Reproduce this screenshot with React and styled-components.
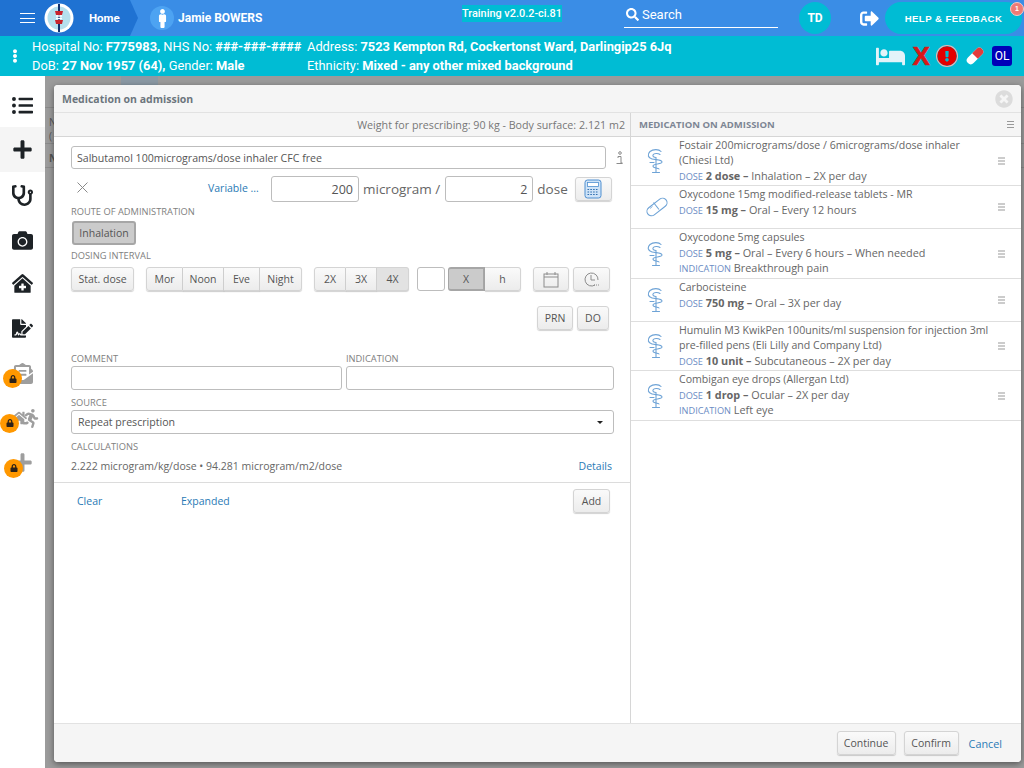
import React from 'react';
import styled, { createGlobalStyle } from 'styled-components';
import {
  FaListUl, FaPlus, FaStethoscope, FaCamera, FaClinicMedical, FaFileSignature,
  FaLock, FaBed, FaExclamationCircle, FaSignOutAlt, FaEnvelopeOpenText,
  FaRunning, FaMale, FaSearch, FaEllipsisV, FaTimesCircle, FaHome,
} from 'react-icons/fa';

const GlobalStyle = createGlobalStyle`
  html, body { margin: 0; padding: 0; height: 100%; overflow: hidden; }
  body { font-family: "Open Sans", "Liberation Sans", sans-serif; color: #555; }
  * { box-sizing: border-box; }
`;

const Page = styled.div`
  width: 1024px;
  height: 768px;
  display: flex;
  flex-direction: column;
  overflow: hidden;
  background: #9b9b9b;
`;

const TopBar = styled.header`
  height: 36px;
  display: flex;
  align-items: center;
  background: #3a8de6;
  color: #fff;
  font-family: Roboto, sans-serif;
  flex: none;
`;

const HomeCrumb = styled.div`
  width: 138px;
  height: 36px;
  display: flex;
  align-items: center;
  flex: none;
  padding-left: 20px;
  background: #1f72d2;
  clip-path: polygon(0 0, 130px 0, 138px 18px, 130px 36px, 0 36px);
`;

const Burger = styled.div`
  width: 15px;
  height: 10px;
  margin-right: 9px;
  border-top: 1px solid #fff;
  border-bottom: 1px solid #fff;
  position: relative;
  &::after {
    content: '';
    position: absolute;
    left: 0;
    right: 0;
    top: 3.5px;
    height: 1px;
    background: #fff;
  }
`;

const CrumbText = styled.span`
  font-size: 11.5px;
  font-weight: 700;
  margin-left: 15px;
`;

const PersonDot = styled.div`
  width: 24px;
  height: 24px;
  margin-left: 12px;
  border-radius: 50%;
  background: #4da3f2;
  display: flex;
  align-items: center;
  justify-content: center;
  font-size: 19px;
  flex: none;
`;

const PatientName = styled.span`
  margin-left: 4px;
  width: 284px;
  font-size: 12px;
  font-weight: 700;
  flex: none;
`;

const Version = styled.div`
  align-self: flex-start;
  margin-top: 5px;
  width: 100px;
  height: 17px;
  display: flex;
  align-items: center;
  justify-content: center;
  background: #00bcd4;
  font-size: 10.9px;
  font-weight: 500;
  flex: none;
  white-space: nowrap;
`;

const SearchBox = styled.div`
  margin-left: 62px;
  width: 154px;
  height: 28px;
  padding: 1px 0 0 2px;
  border-bottom: 1px solid #fff;
  display: flex;
  align-items: center;
  gap: 3px;
  font-size: 13px;
  flex: none;
  align-self: flex-start;
`;

const Avatar = styled.div`
  width: 32px;
  height: 32px;
  margin-left: 21px;
  border-radius: 50%;
  background: #00bcd4;
  display: flex;
  align-items: center;
  justify-content: center;
  font-size: 12px;
  font-weight: 700;
  flex: none;
`;

const LogoutWrap = styled.div`
  margin-left: 29px;
  font-size: 19px;
  display: flex;
  flex: none;
`;

const HelpButton = styled.div`
  position: relative;
  margin-left: 6px;
  width: 137px;
  height: 32px;
  border-radius: 16px;
  background: #00bcd4;
  display: flex;
  align-items: center;
  justify-content: center;
  font-family: "Liberation Sans", sans-serif;
  font-size: 9.6px;
  font-weight: 700;
  letter-spacing: 0.45px;
  flex: none;
`;

const Badge = styled.span`
  position: absolute;
  top: 0;
  right: -2px;
  width: 14px;
  height: 14px;
  border-radius: 50%;
  background: #ef7a75;
  border: 1px solid #f5c9c6;
  color: #fff;
  font-size: 7px;
  line-height: 12px;
  text-align: center;
  letter-spacing: 0;
`;

const PatientBar = styled.div`
  height: 40px;
  display: flex;
  align-items: center;
  background: #00bcd4;
  color: #fff;
  font-family: Roboto, sans-serif;
  font-size: 12.85px;
  line-height: 19px;
  flex: none;
  b { font-weight: 700; }
`;

const KebabCell = styled.div`
  width: 30px;
  margin-right: 2px;
  display: flex;
  justify-content: center;
  font-size: 14px;
  flex: none;
`;

const InfoCol = styled.div`
  width: ${(p) => p.$w}px;
  white-space: nowrap;
  flex: none;
`;

const StatusIcons = styled.div`
  display: flex;
  align-items: center;
  gap: 7.5px;
  margin-left: 2px;
  flex: none;
`;

const RedX = styled.span`
  width: 17px;
  font-family: "Liberation Sans", sans-serif;
  font-size: 26px;
  font-weight: 700;
  line-height: 26px;
  text-align: center;
  color: #d81818;
  -webkit-text-stroke: 0.6px #d81818;
`;

const AlertIcon = styled(FaExclamationCircle)`
  border-radius: 50%;
  color: #e40000;
  box-shadow: 0 0 0 1px #f0b4b4;
`;

const OlTag = styled.div`
  width: 20px;
  height: 20px;
  border-radius: 3px;
  background: #0000b8;
  font-size: 12px;
  display: flex;
  align-items: center;
  justify-content: center;
`;

const Workspace = styled.div`
  flex: 1;
  display: flex;
  min-height: 0;
`;

const SideNav = styled.nav`
  width: 45px;
  background: #fff;
  display: flex;
  flex-direction: column;
  flex: none;
`;

const NavItem = styled.div`
  height: ${(p) => p.$h || 44.7}px;
  padding-top: ${(p) => p.$pt ?? 1}px;
  position: relative;
  display: flex;
  align-items: center;
  justify-content: center;
  font-size: 21px;
  color: ${(p) => (p.$locked ? '#9e9e9e' : '#1d2226')};
  background: ${(p) => (p.$active ? '#f5f5f5' : '#fff')};
`;

const LockBadge = styled.span`
  position: absolute;
  left: ${(p) => p.$left}px;
  top: 18.5px;
  width: 19px;
  height: 19px;
  border-radius: 50%;
  background: #ff9800;
  color: #2b2118;
  font-size: 8px;
  display: flex;
  align-items: center;
  justify-content: center;
`;

const HouseRunner = styled.span`
  display: flex;
  align-items: center;
  font-size: 16px;
  margin-left: 6px;
  svg + svg { margin-left: -6px; font-size: 19px; }
`;

const Stage = styled.main`
  flex: 1;
  padding: 9px 3px 6px 9px;
  background: #9b9b9b;
  position: relative;
  min-width: 0;
`;

// rows of the page under the dialog, only their edges show
const BehindBlock = styled.div`
  position: absolute;
  left: 76px;
  top: 0;
  width: 37px;
  height: 9px;
  background: #8b99a4;
`;

const BehindRow = styled.div`
  position: absolute;
  left: 0;
  right: 0;
  top: ${(p) => p.$top}px;
  padding: 7px 0 0 4px;
  border-top: 1px solid #8a8a8a;
  font-size: 10px;
  font-weight: ${(p) => p.$weight || 400};
  color: #555;
`;

const Modal = styled.section`
  position: relative;
  height: 100%;
  display: flex;
  flex-direction: column;
  background: #fff;
  border-radius: 4px;
  box-shadow: 0 2px 6px rgba(0, 0, 0, 0.45);
  overflow: hidden;
`;

const ModalTitleBar = styled.div`
  height: 28px;
  padding: 0 8px;
  display: flex;
  align-items: center;
  justify-content: space-between;
  background: #f5f5f5;
  border-bottom: 1px solid #e2e2e2;
  flex: none;
`;

const ModalTitle = styled.h1`
  margin: 0;
  font-size: 10.5px;
  font-weight: 700;
  color: #6c757d;
`;

const CloseIcon = styled.span`
  display: flex;
  color: #dcdcdc;
  font-size: 18px;
`;

const ModalBody = styled.div`
  flex: 1;
  display: flex;
  min-height: 0;
`;

const LeftPane = styled.div`
  width: 577px;
  border-right: 1px solid #d6d6d6;
  display: flex;
  flex-direction: column;
  flex: none;
`;

const RightPane = styled.div`
  flex: 1;
  display: flex;
  flex-direction: column;
  min-width: 0;
`;

const PaneHead = styled.div`
  height: 24px;
  display: flex;
  align-items: center;
  justify-content: ${(p) => (p.$right ? 'flex-end' : 'space-between')};
  padding: ${(p) => (p.$right ? '0 5px 0 0' : '0 7px 0 8px')};
  background: #f5f5f5;
  border-bottom: 1px solid #d6d6d6;
  font-size: 10.7px;
  color: #777;
  flex: none;
`;

const PaneHeadTitle = styled.span`
  font-size: 9.5px;
  font-weight: 700;
  color: #7d8694;
`;

const Form = styled.div`
  padding: 9px 16px 0 17px;
  display: flex;
  flex-direction: column;
`;

const Row = styled.div`
  display: flex;
  align-items: center;
  margin-top: ${(p) => p.$mt || 0}px;
  padding-right: ${(p) => p.$pr || 0}px;
  justify-content: ${(p) => p.$justify || 'flex-start'};
  gap: ${(p) => p.$gap || 0}px;
`;

const InfoCell = styled.span`
  display: flex;
  width: 8px;
  margin: 0 -10px 0 10px;
  flex: none;
`;

const ClearCell = styled.span`
  display: flex;
  width: 137px;
  padding: 0 0 3px 6px;
  flex: none;
`;

const Field = styled.div`
  height: ${(p) => p.$h || 24}px;
  width: ${(p) => (p.$w ? `${p.$w}px` : 'auto')};
  flex: ${(p) => (p.$w ? 'none' : 1)};
  margin-left: ${(p) => p.$ml || 0}px;
  border: 1px solid #bdbdbd;
  border-radius: 3px;
  background: #fff;
  display: flex;
  align-items: center;
  justify-content: ${(p) => (p.$end ? 'flex-end' : 'space-between')};
  padding: 0 ${(p) => (p.$end ? 5 : 4)}px 0 ${(p) => p.$pl || 4}px;
  font-size: ${(p) => p.$fs || 10.6}px;
  color: #555;
`;

const Unit = styled.span`
  font-size: 13.5px;
  color: #666;
  margin: 0 ${(p) => p.$mr || 4}px 0 4px;
  white-space: nowrap;
`;

const Label = styled.div`
  font-size: 9.3px;
  color: #808080;
  line-height: 12px;
  margin-top: ${(p) => p.$mt || 0}px;
  width: ${(p) => (p.$w ? `${p.$w}px` : 'auto')};
  flex: ${(p) => (p.$w ? 'none' : 1)};
`;

const LinkText = styled.span`
  font-size: ${(p) => p.$fs || 10.5}px;
  color: #2a7ab5;
  white-space: nowrap;
  width: ${(p) => (p.$w ? `${p.$w}px` : 'auto')};
  margin: 0 0 ${(p) => p.$mb || 0}px ${(p) => p.$ml || 0}px;
`;

const CalcText = styled.span`
  font-size: 10.5px;
  color: #666;
`;

const Btn = styled.div`
  height: ${(p) => p.$h || 24}px;
  width: ${(p) => (p.$w ? `${p.$w}px` : 'auto')};
  margin-left: ${(p) => p.$ml || 0}px;
  display: flex;
  align-items: center;
  justify-content: center;
  border: 1px solid #d4d4d4;
  border-radius: 3px;
  background: ${(p) => (p.$on ? '#e2e2e2' : 'linear-gradient(#fafafa, #ececec)')};
  box-shadow: 0 1px 1px rgba(0, 0, 0, 0.18);
  font-size: 10.5px;
  color: #555;
  white-space: nowrap;
  flex: none;
`;

const PressedBtn = styled(Btn)`
  background: #cbcbcb;
  border: 2px solid #a6a6a6;
  box-shadow: none;
`;

const Group = styled.div`
  display: flex;
  flex: none;
  margin-left: ${(p) => p.$ml || 0}px;
  ${Btn} { border-radius: 0; border-left-width: 0; }
  ${Btn}:first-child { border-radius: 3px 0 0 3px; border-left-width: 1px; }
  ${Btn}:last-child { border-radius: 0 3px 3px 0; }
`;

const CaretDown = styled.span`
  width: 0;
  height: 0;
  margin-right: 6px;
  border-left: 3px solid transparent;
  border-right: 3px solid transparent;
  border-top: 3px solid #222;
`;

const Divider = styled.div`
  height: 1px;
  background: #dcdcdc;
  margin-top: 9px;
`;

const ActionRow = styled.div`
  display: flex;
  align-items: center;
  height: 36px;
  padding: 0 20px 0 23px;
  ${Btn} { margin-left: auto; }
`;

const MedList = styled.div`
  display: flex;
  flex-direction: column;
`;

const MedRow = styled.div`
  height: ${(p) => p.$h}px;
  padding: 1px 0 0 48px;
  border-bottom: 1px solid #dedede;
  position: relative;
  font-size: 10.6px;
  line-height: 15px;
  color: #666;
  b { font-weight: 700; }
`;

const DoseLine = styled.div`
  height: 15px;
  font-size: 10.85px;
`;

const MedIcon = styled.span`
  position: absolute;
  left: 14px;
  top: 50%;
  transform: translateY(-50%);
  display: flex;
  color: #6ea3d6;
`;

const MedMenu = styled.span`
  position: absolute;
  right: 16px;
  top: 50%;
  transform: translateY(-50%);
  width: 7px;
  height: 7px;
  border-top: 1px solid #999;
  border-bottom: 1px solid #999;
  &::after {
    content: '';
    display: block;
    height: 1px;
    margin-top: 2px;
    background: #999;
  }
`;

const HeadMenu = styled(MedMenu)`
  position: static;
  transform: none;
`;

const Caps = styled.span`
  font-size: 9.2px;
  color: #6b8cc4;
`;

const ModalFooter = styled.div`
  height: 39px;
  display: flex;
  align-items: center;
  justify-content: flex-end;
  gap: 8px;
  padding: 0 19px 0 0;
  background: #f5f5f5;
  border-top: 1px solid #e2e2e2;
  flex: none;
`;

function Caduceus() {
  return (
    <svg width="22" height="26" viewBox="0 0 22 26" fill="none" stroke="currentColor" strokeWidth="1.1" strokeLinecap="round">
      <path d="M11 10v14M7.5 24.5h7" />
      <path d="M16 3.5C14 1 8 1 5 3.5 2 6.5 3 10 7 11c4 1 10 .5 10 3s-9 1.5-9 4 6 2 6 3" />
      <path d="M15 6.5c-2-1.5-6-1.5-7 .5-.6 1.5 1 2.5 3 2.5" />
      <path d="M5 14.5h4" />
    </svg>
  );
}

function PillIcon() {
  return (
    <svg width="24" height="24" viewBox="0 0 24 24" fill="none" stroke="currentColor" strokeWidth="1.1">
      <rect x="0.5" y="7.5" width="23" height="9" rx="4.5" transform="rotate(-38 12 12)" />
      <path d="M8.5 7.5l5.5 7" />
      <path d="M5 13.5l2.5-2" strokeWidth="0.8" />
    </svg>
  );
}

function Logo() {
  return (
    <svg width="30" height="30" viewBox="0 0 30 30">
      <circle cx="15" cy="15" r="14.5" fill="#fff" />
      <circle cx="15" cy="15" r="11.5" fill="#b5e0ee" />
      <path d="M15 1v28" stroke="#12316e" strokeWidth="2" />
      <path d="M11 8h8l-1 4h-6zM11 17h8l-1 4h-6z" fill="#c8232c" />
      <path d="M12 13h6M12 15.5h6" stroke="#fff" strokeWidth="1.4" />
    </svg>
  );
}

function Calculator() {
  return (
    <svg width="18" height="20" viewBox="0 0 18 20">
      <rect x="1" y="1" width="16" height="18" rx="2.5" fill="#cfe3f7" stroke="#4f8fd0" />
      <rect x="3.5" y="3.5" width="11" height="4" fill="#fff" stroke="#4f8fd0" strokeWidth="0.8" />
      <path d="M3.5 10.5h11M3.5 13h11M3.5 15.5h11" stroke="#2f6fb0" strokeWidth="1.2" strokeDasharray="1.6 1.2" />
    </svg>
  );
}

function CalendarGlyph() {
  return (
    <svg width="16" height="17" viewBox="0 0 16 17" fill="none" stroke="#8c8c8c">
      <rect x="1" y="3" width="14" height="13" />
      <path d="M1 6h14M4 1v3M12 1v3" />
    </svg>
  );
}

function ClockGlyph() {
  return (
    <svg width="17" height="17" viewBox="0 0 17 17" fill="none" stroke="#8c8c8c">
      <path d="M12 14a6.5 6.5 0 1 1 3-5" />
      <path d="M8 4v5h4" />
      <path d="M11 14h1M13 14h1M15 14h1" />
    </svg>
  );
}

function Capsule() {
  return (
    <svg width="20" height="20" viewBox="0 0 20 20">
      <g transform="rotate(-45 10 10)">
        <rect x="0" y="6" width="20" height="8" rx="4" fill="#fff" />
        <path d="M10 6h6a4 4 0 0 1 0 8h-6z" fill="#e23b3b" />
      </g>
    </svg>
  );
}

function InfoGlyph() {
  return (
    <svg width="7" height="14" viewBox="0 0 7 14" fill="none" stroke="#8a8a8a">
      <circle cx="4" cy="2" r="1.3" />
      <path d="M2 5.5h3v6.5H6.5M.5 12.5h6M2 5.5v1.5" />
    </svg>
  );
}

function ThinX() {
  return (
    <svg width="11" height="11" viewBox="0 0 11 11" stroke="#8a8a8a" fill="none">
      <path d="M.5.5l10 10M10.5.5l-10 10" />
    </svg>
  );
}

const meds = [
  { h: 49, icon: 'c', name: ['Fostair 200micrograms/dose / 6micrograms/dose inhaler', '(Chiesi Ltd)'], dose: '2 dose', rest: 'Inhalation – 2X per day' },
  { h: 43, icon: 'p', name: ['Oxycodone 15mg modified-release tablets - MR'], dose: '15 mg', rest: 'Oral – Every 12 hours' },
  { h: 50, icon: 'c', name: ['Oxycodone 5mg capsules'], dose: '5 mg', rest: 'Oral – Every 6 hours – When needed', ind: 'Breakthrough pain' },
  { h: 43, icon: 'c', name: ['Carbocisteine'], dose: '750 mg', rest: 'Oral – 3X per day' },
  { h: 49, icon: 'c', name: ['Humulin M3 KwikPen 100units/ml suspension for injection 3ml', 'pre-filled pens (Eli Lilly and Company Ltd)'], dose: '10 unit', rest: 'Subcutaneous – 2X per day' },
  { h: 50, icon: 'c', name: ['Combigan eye drops (Allergan Ltd)'], dose: '1 drop', rest: 'Ocular – 2X per day', ind: 'Left eye' },
];

export default function App() {
  return (
    <Page>
      <GlobalStyle />
      <TopBar>
        <HomeCrumb>
          <Burger />
          <Logo />
          <CrumbText>Home</CrumbText>
        </HomeCrumb>
        <PersonDot><FaMale /></PersonDot>
        <PatientName>Jamie BOWERS</PatientName>
        <Version>Training v2.0.2-ci.81</Version>
        <SearchBox><FaSearch size={13} /> Search</SearchBox>
        <Avatar>TD</Avatar>
        <LogoutWrap><FaSignOutAlt /></LogoutWrap>
        <HelpButton>HELP &amp; FEEDBACK<Badge>1</Badge></HelpButton>
      </TopBar>

      <PatientBar>
        <KebabCell><FaEllipsisV /></KebabCell>
        <InfoCol $w={275}>
          <div>Hospital No: <b>F775983,</b> NHS No: <b>###-###-####</b></div>
          <div>DoB: <b>27 Nov 1957 (64),</b> Gender: <b>Male</b></div>
        </InfoCol>
        <InfoCol $w={567}>
          <div>Address: <b>7523 Kempton Rd, Cockertonst Ward, Darlingip25 6Jq</b></div>
          <div>Ethnicity: <b>Mixed - any other mixed background</b></div>
        </InfoCol>
        <StatusIcons>
          <FaBed size={29} color="#e3f3f9" />
          <RedX>X</RedX>
          <AlertIcon size={20} />
          <Capsule />
          <OlTag>OL</OlTag>
        </StatusIcons>
      </PatientBar>

      <Workspace>
        <SideNav>
          <NavItem $h={51} $pt={7}><FaListUl /></NavItem>
          <NavItem $h={45} $active $pt={0}><FaPlus /></NavItem>
          <NavItem $pt={2}><FaStethoscope /></NavItem>
          <NavItem $pt={2}><FaCamera /></NavItem>
          <NavItem $pt={0}><FaClinicMedical /></NavItem>
          <NavItem><FaFileSignature /></NavItem>
          <NavItem $locked><FaEnvelopeOpenText /><LockBadge $left={3}><FaLock /></LockBadge></NavItem>
          <NavItem $locked>
            <HouseRunner><FaHome /><FaRunning /></HouseRunner>
            <LockBadge $left={0}><FaLock /></LockBadge>
          </NavItem>
          <NavItem $locked><FaPlus /><LockBadge $left={4}><FaLock /></LockBadge></NavItem>
        </SideNav>

        <Stage>
          <BehindBlock />
          <BehindRow $top={31}>N<br />(</BehindRow>
          <BehindRow $top={67} $weight={700}>N</BehindRow>
          <BehindRow $top={91} />
          <Modal>
            <ModalTitleBar>
              <ModalTitle>Medication on admission</ModalTitle>
              <CloseIcon><FaTimesCircle /></CloseIcon>
            </ModalTitleBar>
            <ModalBody>
              <LeftPane>
                <PaneHead $right>Weight for prescribing: 90 kg - Body surface: 2.121 m2</PaneHead>
                <Form>
                  <Row>
                    <Field $pl={5} $h={23}>Salbutamol 100micrograms/dose inhaler CFC free</Field>
                    <InfoCell><InfoGlyph /></InfoCell>
                  </Row>
                  <Row $mt={7}>
                    <ClearCell><ThinX /></ClearCell>
                    <LinkText $w={63} $mb={3}>Variable ...</LinkText>
                    <Field $w={88} $h={26} $end $fs={12.5}>200</Field>
                    <Unit $mr={5}>microgram /</Unit>
                    <Field $w={88} $h={26} $end $fs={12.5}>2</Field>
                    <Unit $mr={7}>dose</Unit>
                    <Btn $w={37} $h={24}><Calculator /></Btn>
                  </Row>
                  <Label $mt={4}>ROUTE OF ADMINISTRATION</Label>
                  <Row $mt={3}><PressedBtn $w={64} $ml={1}>Inhalation</PressedBtn></Row>
                  <Label $mt={5}>DOSING INTERVAL</Label>
                  <Row $mt={5}>
                    <Btn $w={63}>Stat. dose</Btn>
                    <Group $ml={12}>
                      <Btn $w={37}>Mor</Btn>
                      <Btn $w={41}>Noon</Btn>
                      <Btn $w={36}>Eve</Btn>
                      <Btn $w={42}>Night</Btn>
                    </Group>
                    <Group $ml={12}>
                      <Btn $w={32}>2X</Btn>
                      <Btn $w={31}>3X</Btn>
                      <Btn $w={32} $on>4X</Btn>
                    </Group>
                    <Field $w={28} $ml={8} />
                    <Group $ml={3}>
                      <PressedBtn $w={37}>X</PressedBtn>
                      <Btn $w={36}>h</Btn>
                    </Group>
                    <Btn $w={36} $ml={12}><CalendarGlyph /></Btn>
                    <Btn $w={37} $ml={4}><ClockGlyph /></Btn>
                  </Row>
                  <Row $mt={15} $justify="flex-end" $gap={4} $pr={5}>
                    <Btn $w={36}>PRN</Btn>
                    <Btn $w={32}>DO</Btn>
                  </Row>
                  <Row $mt={23} $gap={4}>
                    <Label>COMMENT</Label>
                    <Label $w={268}>INDICATION</Label>
                  </Row>
                  <Row $mt={1} $gap={4}>
                    <Field />
                    <Field $w={268} />
                  </Row>
                  <Label $mt={7}>SOURCE</Label>
                  <Row $mt={1}>
                    <Field $pl={6}>
                      <span>Repeat prescription</span>
                      <CaretDown />
                    </Field>
                  </Row>
                  <Label $mt={7}>CALCULATIONS</Label>
                  <Row $mt={6} $justify="space-between" $pr={2}>
                    <CalcText>2.222 microgram/kg/dose • 94.281 microgram/m2/dose</CalcText>
                    <LinkText>Details</LinkText>
                  </Row>
                </Form>
                <Divider />
                <ActionRow>
                  <LinkText $w={104}>Clear</LinkText>
                  <LinkText>Expanded</LinkText>
                  <Btn $w={37}>Add</Btn>
                </ActionRow>
              </LeftPane>
              <RightPane>
                <PaneHead>
                  <PaneHeadTitle>MEDICATION ON ADMISSION</PaneHeadTitle>
                  <HeadMenu />
                </PaneHead>
                <MedList>
                  {meds.map((m) => (
                    <MedRow key={m.name[0]} $h={m.h}>
                      <MedIcon>{m.icon === 'p' ? <PillIcon /> : <Caduceus />}</MedIcon>
                      {m.name.map((line) => <div key={line}>{line}</div>)}
                      <DoseLine><Caps>DOSE</Caps> <b>{m.dose} –</b> {m.rest}</DoseLine>
                      {m.ind && <DoseLine><Caps>INDICATION</Caps> {m.ind}</DoseLine>}
                      <MedMenu />
                    </MedRow>
                  ))}
                </MedList>
              </RightPane>
            </ModalBody>
            <ModalFooter>
              <Btn $w={59}>Continue</Btn>
              <Btn $w={55}>Confirm</Btn>
              <LinkText $fs={10.8} $ml={2}>Cancel</LinkText>
            </ModalFooter>
          </Modal>
        </Stage>
      </Workspace>
    </Page>
  );
}
